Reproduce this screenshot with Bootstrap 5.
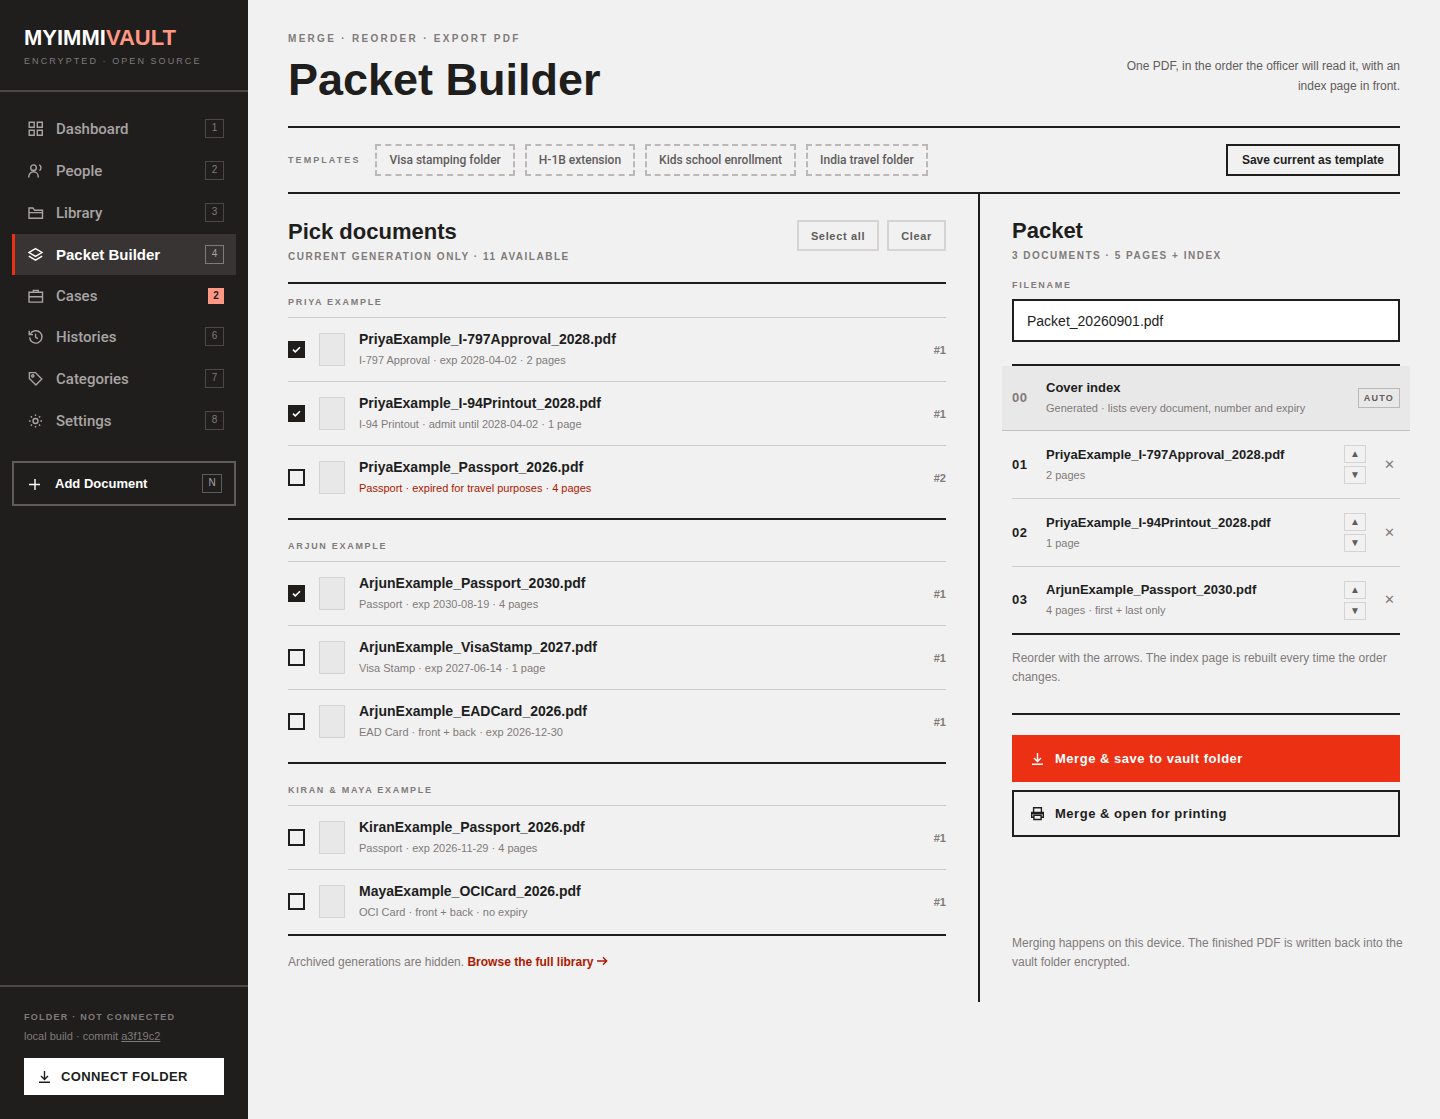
<!DOCTYPE html>
<html lang="en">
<head>
<meta charset="utf-8">
<meta name="viewport" content="width=device-width, initial-scale=1">
<title>Packet Builder · MyImmiVault</title>
<link rel="stylesheet" href="https://cdn.jsdelivr.net/npm/bootstrap@5.3.0/dist/css/bootstrap.min.css">
<style>
:root{--ink:#201e1d;--paper:#f2f1f1;--muted:#7f7b7a;--soft:#605c5b;--rule:#cfcccc;--accent:#ec3013;--deep:#ae1800;--coral:#ff9783;--medium:Roboto,"Liberation Sans",sans-serif}
body{font-family:"Liberation Sans",Arial,sans-serif;font-size:14px;line-height:20px;color:var(--ink);background:var(--paper)}
svg{flex:none;fill:none;stroke:currentColor;stroke-width:1.4}
button,input,.btn{border-radius:0!important}
.overline{font-size:10px;line-height:12px;font-weight:700;letter-spacing:.15em;text-transform:uppercase;color:var(--muted);margin:0}
.overline-sm{font-size:9px;letter-spacing:.19em}
.overline-wide{letter-spacing:.23em}
.rule-b{border-bottom:2px solid var(--ink)}
.rule-t{border-top:2px solid var(--ink)}

.side{width:248px;flex:none;background:var(--ink);color:#a8a4a3}
.side-head{padding:26px 24px 23px;border-bottom:2px solid #4a4746}
.brand-name{font-size:22px;line-height:24px;font-weight:700;color:#fff;text-decoration:none;display:block;margin-bottom:5px}
.brand-name span{color:var(--coral)}
.side-nav{padding:16px 12px 0;gap:1px}
.side-link{height:41px;padding:0 12px 0 13px;gap:12px;border-left:3px solid transparent;font:500 15px/20px var(--medium);color:#a8a4a3;text-decoration:none}
.side-link:hover{color:#fff}
.side-link.slim{height:39px}
.side-link.current{background:#373433;border-left-color:var(--accent);color:#fff;font:700 15px/20px "Liberation Sans",Arial,sans-serif}
.keycap{width:19px;height:19px;border:1px solid #4a4746;font:400 10px/16px "Liberation Sans",Arial,sans-serif;text-align:center;color:#7f7b7a}
.current .keycap{border-color:#7f7b7a;color:#a8a4a3}
.due{width:16px;height:16px;background:var(--coral);color:var(--ink);font:700 10px/16px "Liberation Sans",Arial,sans-serif;text-align:center}
.add-doc{margin:20px 12px 0;height:45px;padding:0 12px 0 14px;gap:13px;border:2px solid #605c5b;background:none;color:#fff;font-size:13px;font-weight:700}
.add-doc .keycap{width:20px;border-color:#605c5b;color:#a8a4a3}
.side-foot{padding:24px;border-top:2px solid #4a4746}
.side-foot .overline{letter-spacing:.14em}
.build{font-size:11px;line-height:16px;margin:5px 0 14px;color:#7f7b7a}
.build a{color:inherit}
.connect{width:100%;height:37px;padding:0 13px;gap:9px;border:0;background:#fff;color:var(--ink);font-size:13px;font-weight:700;letter-spacing:.03em}

.page{padding:0 40px;min-width:0}
.page-head{padding:33px 0 24px}
.page-head h1{font-size:45px;line-height:44px;font-weight:700;margin:13px 0 0}
.page-head p.intro{font-size:12px;line-height:20px;max-width:280px;color:var(--soft);margin:0 0 6px}
.templates{padding:16px 0;gap:10px}
.templates .overline{margin-right:5px}
.chip{height:32px;padding:0 12px;border:2px dashed #bcb8b7;background:none;color:var(--soft);font:500 12px/16px var(--medium)}
.chip-save{height:32px;padding:0 14px;border:2px solid var(--ink);background:none;color:var(--ink);font-size:12px;font-weight:700}
h2{font-size:22px;line-height:24px;font-weight:700;margin:0 0 7px}
.picker{padding:26px 32px 30px 0;min-width:0}
.picker-head{padding-bottom:19px}
.mini{height:31px;padding:0 12px;border:2px solid #d7d3d3;background:none;color:var(--soft);font-size:11px;font-weight:700;letter-spacing:.06em}
.person + .person{padding-top:8px}
.person{padding-bottom:8px}
.person:last-of-type{padding-bottom:0}
.person h3{height:34px;padding-top:12px;border-bottom:1px solid var(--rule)}
.doc{height:64px;gap:14px;border-bottom:1px solid var(--rule);cursor:pointer}
.doc:last-child{border-bottom-color:transparent}
.doc .form-check-input{width:17px;height:17px;margin:0;border:2px solid var(--ink);background-color:transparent;flex:none}
.doc .form-check-input:checked{background-color:var(--ink);background-size:11px 11px;background-image:url("data:image/svg+xml,%3csvg xmlns='http://www.w3.org/2000/svg' viewBox='0 0 11 11'%3e%3cpath fill='none' stroke='%23fff' stroke-width='1.6' d='M2 5.6l2.3 2.2L9 3.2'/%3e%3c/svg%3e")}
.thumb{width:26px;height:33px;border:1px solid #d7d3d3;background:#e9e8e8;flex:none}
.doc-name{font-size:14px;line-height:21px;font-weight:700}
.doc-meta{font-size:11px;line-height:21px;color:var(--muted)}
.doc-meta.late{color:var(--deep)}
.version{font-size:11px;font-weight:700;color:var(--muted)}
.more{font-size:12px;line-height:20px;color:var(--muted);margin:16px 0 0}
.more a{color:var(--deep);font-weight:700;text-decoration:none}
.more svg{vertical-align:baseline}

.packet{width:422px;flex:none;padding:25px 0 30px 32px;border-left:2px solid var(--ink)}
.packet label{display:block;margin:17px 0 8px}
.file-box{height:43px;padding:0 13px;border:2px solid var(--ink);background:#fff;font-size:14px;color:var(--ink)}
.file-box:focus{border-color:var(--accent);box-shadow:none}
.order{margin-top:22px}
.entry{height:68px;border-bottom:1px solid var(--rule)}
.entry:last-child{height:66px;border-bottom:0}
.entry.cover{height:65px;margin:0 -10px;padding:0 10px;background:#e9e8e8;border-color:#c4c1c0}
.entry-no{width:34px;flex:none;font-size:13px;font-weight:700;letter-spacing:.04em}
.cover .entry-no{color:var(--muted)}
.entry-name{font-size:13px;line-height:20px;font-weight:700}
.entry-meta{font-size:11px;line-height:20px;color:var(--muted)}
.auto{height:20px;padding:0 5px;border:1px solid #bcb8b7;font-size:9px;line-height:18px;font-weight:700;letter-spacing:.14em;color:var(--soft)}
.movers{gap:3px}
.movers button{width:22px;height:18px;padding:0;border:1px solid #d7d3d3;background:none;color:var(--soft);font-size:10px;line-height:14px}
.drop{width:22px;height:22px;margin-left:12px;padding:0;border:0;background:none;color:var(--muted);font-size:13px;line-height:20px}
.fine{font-size:12px;line-height:19px;color:var(--muted);margin:0 -6px 0 0}
.order + .fine{margin-top:14px}
.actions{margin-top:26px;padding-top:20px;gap:8px}
.act{height:47px;padding:0 16px;gap:10px;border:2px solid var(--ink);background:none;color:var(--ink);font-size:13px;font-weight:700;letter-spacing:.04em}
.act.go{background:var(--accent);border-color:var(--accent);color:#fff}
</style>
</head>
<body>
<div class="d-flex min-vh-100">
  <aside class="side d-flex flex-column">
    <div class="side-head">
      <a class="brand-name" href="#">MYIMMI<span>VAULT</span></a>
      <p class="overline overline-sm overline-wide fw-normal">Encrypted · Open source</p>
    </div>
    <nav class="side-nav d-flex flex-column" aria-label="Main">
      <a class="side-link d-flex align-items-center" href="#"><svg width="16" height="16" viewBox="0 0 16 16"><path d="M1.2 1.2h5v5h-5zM9.3 1.2h5v5h-5zM1.2 9.3h5v5h-5zM9.3 9.3h5v5h-5z"/></svg><span class="flex-grow-1">Dashboard</span><span class="keycap">1</span></a>
      <a class="side-link d-flex align-items-center" href="#"><svg width="16" height="16" viewBox="0 0 16 16"><circle cx="5.5" cy="4.7" r="2.8"/><path d="M.8 14.4v-.9a4.7 4.7 0 0 1 9.4 0v.9M11.2 1.9c2.3.8 2.3 4.6.2 5.6"/></svg><span class="flex-grow-1">People</span><span class="keycap">2</span></a>
      <a class="side-link d-flex align-items-center" href="#"><svg width="16" height="16" viewBox="0 0 16 16"><path d="M1 13.3V3h4l1.6 2.3h7.9v8zM1 7.6h13.5"/></svg><span class="flex-grow-1">Library</span><span class="keycap">3</span></a>
      <a class="side-link current d-flex align-items-center" href="#" aria-current="page"><svg width="16" height="16" viewBox="0 0 16 16"><path d="M7.5 1.6l6.5 3.9-6.5 3.9L1 5.5zM.8 9.2l6.7 4 6.7-4"/></svg><span class="flex-grow-1">Packet Builder</span><span class="keycap">4</span></a>
      <a class="side-link slim d-flex align-items-center" href="#"><svg width="16" height="16" viewBox="0 0 16 16"><path d="M1 4.3h13.5v9.8H1zM5.3 4.3V2.4h4.9v1.9M1 8.7h13.5"/></svg><span class="flex-grow-1">Cases</span><span class="due">2</span></a>
      <a class="side-link d-flex align-items-center" href="#"><svg width="16" height="16" viewBox="0 0 16 16"><path d="M2.2 5.2A6.2 6.2 0 1 1 1.6 8.4M1.2 1.8v3.8H5M7.6 4.8v3.6l2.3 1.3"/></svg><span class="flex-grow-1">Histories</span><span class="keycap">6</span></a>
      <a class="side-link d-flex align-items-center" href="#"><svg width="16" height="16" viewBox="0 0 16 16"><path d="M1.4 1.6h6l6.4 6.4-5.9 6-6.5-6.5z"/><circle cx="4.8" cy="4.9" r="1.1"/></svg><span class="flex-grow-1">Categories</span><span class="keycap">7</span></a>
      <a class="side-link d-flex align-items-center" href="#"><svg width="16" height="16" viewBox="0 0 16 16"><circle cx="7.5" cy="8" r="2.5"/><path d="M7.5 1.4v1.7M7.5 12.9v1.7M.9 8h1.7M12.4 8h1.7M2.8 3.3L4 4.5M11 11.5l1.2 1.2M2.8 12.7L4 11.5M11 4.5l1.2-1.2"/></svg><span class="flex-grow-1">Settings</span><span class="keycap">8</span></a>
    </nav>
    <button class="add-doc d-flex align-items-center text-start" type="button"><svg width="14" height="14" viewBox="0 0 14 14"><path d="M7 2v11M1 7.5h11"/></svg><span class="flex-grow-1">Add Document</span><span class="keycap">N</span></button>
    <div class="side-foot mt-auto">
      <p class="overline overline-sm">Folder · not connected</p>
      <p class="build">local build · commit <a href="#">a3f19c2</a></p>
      <button class="connect d-flex align-items-center" type="button"><svg width="15" height="15" viewBox="0 0 15 15"><path d="M7.5 2v8M4 7l3.5 3.4L11 7M2 13.3h11"/></svg>CONNECT FOLDER</button>
    </div>
  </aside>

  <main class="page flex-grow-1">
    <header class="page-head rule-b d-flex justify-content-between align-items-end">
      <div>
        <p class="overline overline-wide">Merge · Reorder · Export PDF</p>
        <h1>Packet Builder</h1>
      </div>
      <p class="intro text-end">One PDF, in the order the officer will read it, with an index page in front.</p>
    </header>
    <section class="templates rule-b d-flex align-items-center flex-wrap" aria-label="Templates">
      <span class="overline overline-sm overline-wide">Templates</span>
      <button class="chip" type="button">Visa stamping folder</button>
      <button class="chip" type="button">H-1B extension</button>
      <button class="chip" type="button">Kids school enrollment</button>
      <button class="chip" type="button">India travel folder</button>
      <button class="chip-save ms-auto" type="button">Save current as template</button>
    </section>

    <div class="d-flex">
      <section class="picker flex-grow-1">
        <div class="picker-head rule-b d-flex justify-content-between align-items-start">
          <div>
            <h2>Pick documents</h2>
            <p class="overline">Current generation only · 11 available</p>
          </div>
          <div class="d-flex gap-2">
            <button class="mini" type="button">Select all</button>
            <button class="mini" type="button">Clear</button>
          </div>
        </div>

        <div class="person rule-b">
          <h3 class="overline overline-sm">Priya Example</h3>
          <div>
            <label class="doc d-flex align-items-center"><input class="form-check-input" type="checkbox" checked><span class="thumb"></span><span class="flex-grow-1"><span class="doc-name d-block">PriyaExample_I-797Approval_2028.pdf</span><span class="doc-meta d-block">I-797 Approval · exp 2028-04-02 · 2 pages</span></span><span class="version">#1</span></label>
            <label class="doc d-flex align-items-center"><input class="form-check-input" type="checkbox" checked><span class="thumb"></span><span class="flex-grow-1"><span class="doc-name d-block">PriyaExample_I-94Printout_2028.pdf</span><span class="doc-meta d-block">I-94 Printout · admit until 2028-04-02 · 1 page</span></span><span class="version">#1</span></label>
            <label class="doc d-flex align-items-center"><input class="form-check-input" type="checkbox"><span class="thumb"></span><span class="flex-grow-1"><span class="doc-name d-block">PriyaExample_Passport_2026.pdf</span><span class="doc-meta late d-block">Passport · expired for travel purposes · 4 pages</span></span><span class="version">#2</span></label>
          </div>
        </div>
        <div class="person rule-b">
          <h3 class="overline overline-sm">Arjun Example</h3>
          <div>
            <label class="doc d-flex align-items-center"><input class="form-check-input" type="checkbox" checked><span class="thumb"></span><span class="flex-grow-1"><span class="doc-name d-block">ArjunExample_Passport_2030.pdf</span><span class="doc-meta d-block">Passport · exp 2030-08-19 · 4 pages</span></span><span class="version">#1</span></label>
            <label class="doc d-flex align-items-center"><input class="form-check-input" type="checkbox"><span class="thumb"></span><span class="flex-grow-1"><span class="doc-name d-block">ArjunExample_VisaStamp_2027.pdf</span><span class="doc-meta d-block">Visa Stamp · exp 2027-06-14 · 1 page</span></span><span class="version">#1</span></label>
            <label class="doc d-flex align-items-center"><input class="form-check-input" type="checkbox"><span class="thumb"></span><span class="flex-grow-1"><span class="doc-name d-block">ArjunExample_EADCard_2026.pdf</span><span class="doc-meta d-block">EAD Card · front + back · exp 2026-12-30</span></span><span class="version">#1</span></label>
          </div>
        </div>
        <div class="person rule-b">
          <h3 class="overline overline-sm">Kiran &amp; Maya Example</h3>
          <div>
            <label class="doc d-flex align-items-center"><input class="form-check-input" type="checkbox"><span class="thumb"></span><span class="flex-grow-1"><span class="doc-name d-block">KiranExample_Passport_2026.pdf</span><span class="doc-meta d-block">Passport · exp 2026-11-29 · 4 pages</span></span><span class="version">#1</span></label>
            <label class="doc d-flex align-items-center"><input class="form-check-input" type="checkbox"><span class="thumb"></span><span class="flex-grow-1"><span class="doc-name d-block">MayaExample_OCICard_2026.pdf</span><span class="doc-meta d-block">OCI Card · front + back · no expiry</span></span><span class="version">#1</span></label>
          </div>
        </div>
        <p class="more">Archived generations are hidden. <a href="#">Browse the full library <svg width="11" height="10" viewBox="0 0 11 10"><path d="M0 5h9.5M6 1.3L9.7 5 6 8.7"/></svg></a></p>
      </section>

      <section class="packet d-flex flex-column">
        <h2>Packet</h2>
        <p class="overline">3 documents · 5 pages + index</p>
        <label class="overline overline-sm" for="filename">Filename</label>
        <input class="file-box form-control" id="filename" type="text" value="Packet_20260901.pdf">
        <div class="order rule-t rule-b">
          <div class="entry cover d-flex align-items-center"><span class="entry-no">00</span><span class="flex-grow-1"><span class="entry-name d-block">Cover index</span><span class="entry-meta d-block">Generated · lists every document, number and expiry</span></span><span class="auto">AUTO</span></div>
          <div class="entry d-flex align-items-center"><span class="entry-no">01</span><span class="flex-grow-1"><span class="entry-name d-block">PriyaExample_I-797Approval_2028.pdf</span><span class="entry-meta d-block">2 pages</span></span><span class="movers d-flex flex-column"><button type="button" aria-label="Move up">▲</button><button type="button" aria-label="Move down">▼</button></span><button class="drop" type="button" aria-label="Remove">✕</button></div>
          <div class="entry d-flex align-items-center"><span class="entry-no">02</span><span class="flex-grow-1"><span class="entry-name d-block">PriyaExample_I-94Printout_2028.pdf</span><span class="entry-meta d-block">1 page</span></span><span class="movers d-flex flex-column"><button type="button" aria-label="Move up">▲</button><button type="button" aria-label="Move down">▼</button></span><button class="drop" type="button" aria-label="Remove">✕</button></div>
          <div class="entry d-flex align-items-center"><span class="entry-no">03</span><span class="flex-grow-1"><span class="entry-name d-block">ArjunExample_Passport_2030.pdf</span><span class="entry-meta d-block">4 pages · first + last only</span></span><span class="movers d-flex flex-column"><button type="button" aria-label="Move up">▲</button><button type="button" aria-label="Move down">▼</button></span><button class="drop" type="button" aria-label="Remove">✕</button></div>
        </div>
        <p class="fine">Reorder with the arrows. The index page is rebuilt every time the order changes.</p>
        <div class="actions rule-t d-flex flex-column">
          <button class="act go d-flex align-items-center" type="button"><svg width="15" height="15" viewBox="0 0 15 15"><path d="M7.5 2v8M4 7l3.5 3.4L11 7M2 13.3h11"/></svg>Merge &amp; save to vault folder</button>
          <button class="act d-flex align-items-center" type="button"><svg width="15" height="15" viewBox="0 0 15 15"><path d="M3.6 5.8V1.7h7.8v4.1M3.5 11.3H1.7V6.5h11.6v4.8h-1.8M3.9 9.3h7.2v4.2H3.9z"/><path d="M1.7 7.3h11.6" stroke-width="2"/></svg>Merge &amp; open for printing</button>
        </div>
        <p class="fine mt-auto">Merging happens on this device. The finished PDF is written back into the vault folder encrypted.</p>
      </section>
    </div>
  </main>
</div>
<script src="https://cdn.jsdelivr.net/npm/bootstrap@5.3.0/dist/js/bootstrap.bundle.min.js"></script>
</body>
</html>
